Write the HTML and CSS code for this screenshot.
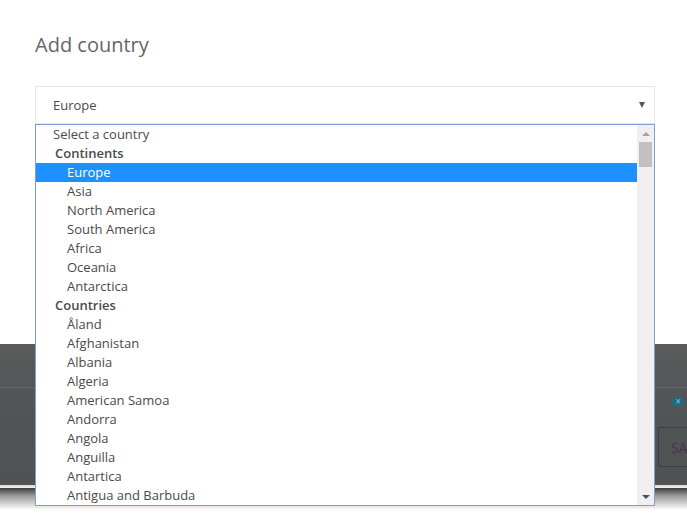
FILE: index.html
```html
<!DOCTYPE html>
<html>
<head>
<meta charset="utf-8">
<link rel="stylesheet" href="styles.css">
</head>
<body>
<div class="page">
  <h1 class="title">Add country</h1>
  <div class="field">
    <div class="select-box">
      <span class="select-value">Europe</span>
      <span class="select-arrow"></span>
    </div>
    <div class="listbox">
      <div class="options">
        <div class="opt top">Select a country</div>
        <div class="group">Continents</div>
        <div class="opt sel">Europe</div>
        <div class="opt">Asia</div>
        <div class="opt">North America</div>
        <div class="opt">South America</div>
        <div class="opt">Africa</div>
        <div class="opt">Oceania</div>
        <div class="opt">Antarctica</div>
        <div class="group">Countries</div>
        <div class="opt">Åland</div>
        <div class="opt">Afghanistan</div>
        <div class="opt">Albania</div>
        <div class="opt">Algeria</div>
        <div class="opt">American Samoa</div>
        <div class="opt">Andorra</div>
        <div class="opt">Angola</div>
        <div class="opt">Anguilla</div>
        <div class="opt">Antartica</div>
        <div class="opt">Antigua and Barbuda</div>
      </div>
      <div class="scrollbar">
        <div class="sb-btn"><span class="tri-up"></span></div>
        <div class="sb-thumb"></div>
        <div class="sb-track"></div>
        <div class="sb-btn"><span class="tri-down"></span></div>
      </div>
    </div>
  </div>
</div>
<div class="backdrop">
  <div class="band">
    <div class="band-row">
      <div class="band-line"></div>
      <div class="band-icon"><span>×</span></div>
    </div>
    <div class="band-actions">
      <button class="band-btn">SA</button>
    </div>
  </div>
  <div class="band-edge"></div>
  <div class="band-shadow"></div>
</div>
</body>
</html>
```
FILE: styles.css
```css
html, body {
  margin: 0;
  padding: 0;
  background: #ffffff;
  overflow: hidden;
  width: 687px;
  height: 519px;
  font-family: "Open Sans", "Liberation Sans", sans-serif;
}

.page {
  padding: 0 0 0 35px;
  width: 620px;
  position: relative;
  z-index: 2;
}

.title {
  margin: 0;
  padding-top: 30px;
  height: 86px;
  box-sizing: border-box;
  font-size: 20px;
  font-weight: 400;
  line-height: 30px;
  color: #666666;
}

.field {
  position: relative;
}

.select-box {
  box-sizing: border-box;
  height: 38px;
  border: 1px solid #e6e6e6;
  display: flex;
  align-items: center;
  padding: 0 9px 0 17px;
  font-size: 13px;
  color: #4a4a4a;
  background: #fff;
}

.select-value {
  flex: 1;
}

.select-arrow {
  width: 0;
  height: 0;
  border-left: 3.5px solid transparent;
  border-right: 3.5px solid transparent;
  border-top: 6px solid #555;
}

.listbox {
  position: absolute;
  top: 100%;
  left: 0;
  width: 620px;
  height: 382px;
  box-sizing: border-box;
  border: 1px solid #7d9fd8;
  background: #fff;
  display: flex;
}

.options {
  flex: 1;
  font-size: 13px;
  color: #4a4a4a;
}

.opt, .group {
  height: 19px;
  line-height: 19px;
  white-space: nowrap;
  padding-left: 31px;
}

.opt.top {
  padding-left: 17px;
}

.group {
  padding-left: 19px;
  font-weight: 600;
}

.opt.sel {
  background: #1e90ff;
  color: #ffffff;
}

.scrollbar {
  width: 17px;
  background: #f0f0f0;
  display: flex;
  flex-direction: column;
}

.sb-btn {
  height: 17px;
  display: flex;
  align-items: center;
  justify-content: center;
}

.tri-up {
  width: 0;
  height: 0;
  border-left: 4px solid transparent;
  border-right: 4px solid transparent;
  border-bottom: 4px solid #a3a3a3;
}

.tri-down {
  width: 0;
  height: 0;
  border-left: 4px solid transparent;
  border-right: 4px solid transparent;
  border-top: 4px solid #505050;
}

.sb-thumb {
  margin: 0 2px;
  height: 25px;
  background: #c1c1c1;
}

.sb-track {
  flex: 1;
}

.backdrop {
  margin-top: 220px;
  position: relative;
  z-index: 1;
}

.band {
  height: 141px;
  background: linear-gradient(#5b5b5b, #525556 40%, #4f5253);
  position: relative;
  overflow: hidden;
}

.band-row {
  height: 66px;
  display: flex;
  align-items: flex-end;
  padding-left: 655px;
  position: relative;
}

.band-line {
  position: absolute;
  left: 0;
  right: 0;
  top: 43px;
  height: 1px;
  background: #6a6a6a;
}

.band-icon {
  margin-left: 17px;
  margin-bottom: 4px;
  width: 12px;
  height: 9px;
  border-radius: 5px 5px 1px 1px;
  background: #1e6a86;
  color: #9fb7c0;
  font-size: 10px;
  line-height: 9px;
  text-align: center;
}

.band-actions {
  padding-left: 658px;
  padding-top: 17px;
}

.band-btn {
  box-sizing: border-box;
  width: 40px;
  height: 40px;
  border: 1px solid #4a3550;
  border-radius: 2px;
  background: transparent;
  color: #4a3352;
  font-family: "Open Sans", "Liberation Sans", sans-serif;
  font-size: 14px;
  text-align: left;
  padding: 0 0 0 12px;
  white-space: nowrap;
}

.band-edge {
  height: 3px;
  background: linear-gradient(#d4d4d4, #f2f2f2);
}

.band-shadow {
  height: 22px;
  background: linear-gradient(#3c3c3c, #9a9a9a 35%, #ffffff);
}
```
